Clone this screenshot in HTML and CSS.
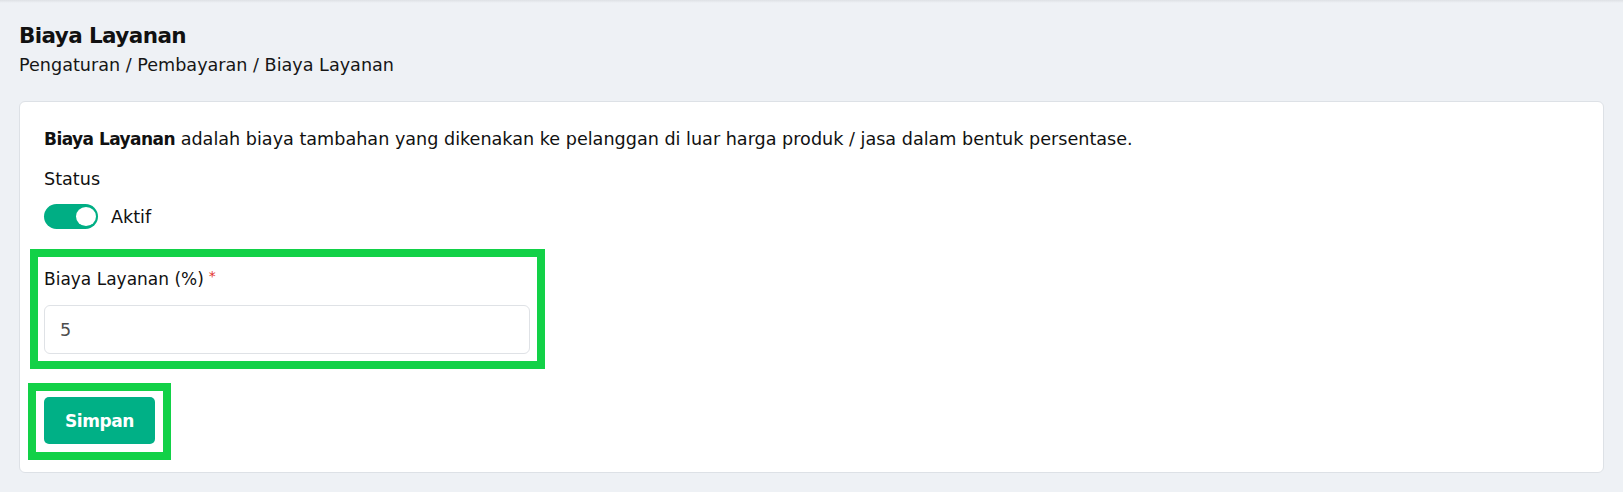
FILE: index.html
```html
<!DOCTYPE html>
<html lang="id">
<head>
    <meta charset="UTF-8">
    <meta name="viewport" content="width=device-width, initial-scale=1.0">
    <title>Biaya Layanan</title>
    <link rel="stylesheet" href="styles.css">
</head>
<body>
    <div class="topbar"></div>

    <div class="page">
        <div class="page-header">
            <div class="page-title">Biaya Layanan</div>
            <div class="breadcrumb">Pengaturan / Pembayaran / Biaya Layanan</div>
        </div>

        <div class="card">
            <p class="card-desc">
                <strong>Biaya Layanan</strong> adalah biaya tambahan yang dikenakan ke pelanggan di luar harga produk / jasa dalam bentuk persentase.
            </p>

            <div class="status-label">Status</div>
            <label class="switch-row">
                <span class="switch switch-on"><span class="switch-knob"></span></span>
                <span class="switch-text">Aktif</span>
            </label>

            <div class="highlight highlight-field">
                <label class="form-label" for="serviceFee">Biaya Layanan (%)<span class="required">*</span></label>
                <input type="text" class="form-input" id="serviceFee" value="5">
            </div>

            <div class="highlight highlight-btn">
                <button class="btn btn-primary">Simpan</button>
            </div>
        </div>
    </div>
</body>
</html>
```

FILE: styles.css
```css
* {
    margin: 0;
    padding: 0;
    box-sizing: border-box;
}

body {
    font-family: 'DejaVu Sans', 'Open Sans', sans-serif;
    font-size: 17.6px;
    line-height: 24px;
    background: #eef1f5;
    color: #111111;
}

.topbar {
    height: 3px;
    background: linear-gradient(180deg, #dee1e5 0%, #eef1f5 100%);
}

.page {
    padding: 0 19px;
}

.page-header {
    margin-top: 19px;
    margin-bottom: 24px;
}

.page-title {
    font-size: 21.5px;
    font-weight: bold;
    letter-spacing: -0.6px;
    line-height: 28px;
    margin-bottom: 3px;
}

.breadcrumb {
    color: #161616;
}

.card {
    background: #ffffff;
    border: 1px solid #dde1e6;
    border-radius: 6px;
    padding: 25px 24px 12px 24px;
}

.card-desc strong {
    font-size: 17px;
    letter-spacing: -0.55px;
}

.status-label {
    margin-top: 16px;
}

.switch-row {
    display: flex;
    align-items: center;
    gap: 13px;
    margin-top: 13px;
    height: 25px;
}

.switch {
    position: relative;
    display: inline-block;
    width: 54px;
    height: 25px;
    border-radius: 13px;
    background: #c9ced4;
}

.switch-on {
    background: #00ae84;
}

.switch-knob {
    position: absolute;
    top: 3px;
    left: 3px;
    width: 20px;
    height: 19px;
    border-radius: 50%;
    background: #ffffff;
}

.switch-on .switch-knob {
    left: auto;
    right: 2px;
}

.highlight {
    border: 8px solid #12d147;
}

.highlight-field {
    width: 515px;
    margin: 20px 0 0 -14px;
    padding: 10px 7px 7px 6px;
}

.highlight-btn {
    display: inline-block;
    margin: 14px 0 0 -16px;
    padding: 6px 8px 8px 8px;
}

.form-label {
    display: block;
    font-size: 17px;
    margin-bottom: 14px;
}

.required {
    margin-left: 5px;
    font-size: 14px;
    vertical-align: 0.3em;
    line-height: 0;
    color: #e3342f;
}

.form-input {
    display: block;
    width: 100%;
    height: 49px;
    padding: 0 15px;
    border: 1px solid #dfe2e6;
    border-radius: 6px;
    font-family: inherit;
    font-size: 17.6px;
    color: #4d4d4d;
    background: #ffffff;
}

.btn {
    display: block;
    border: none;
    font-family: inherit;
    cursor: pointer;
}

.btn-primary {
    width: 111px;
    height: 47px;
    border-radius: 5px;
    background: #00b086;
    color: #ffffff;
    font-size: 17px;
    font-weight: bold;
    letter-spacing: -0.4px;
}
```
